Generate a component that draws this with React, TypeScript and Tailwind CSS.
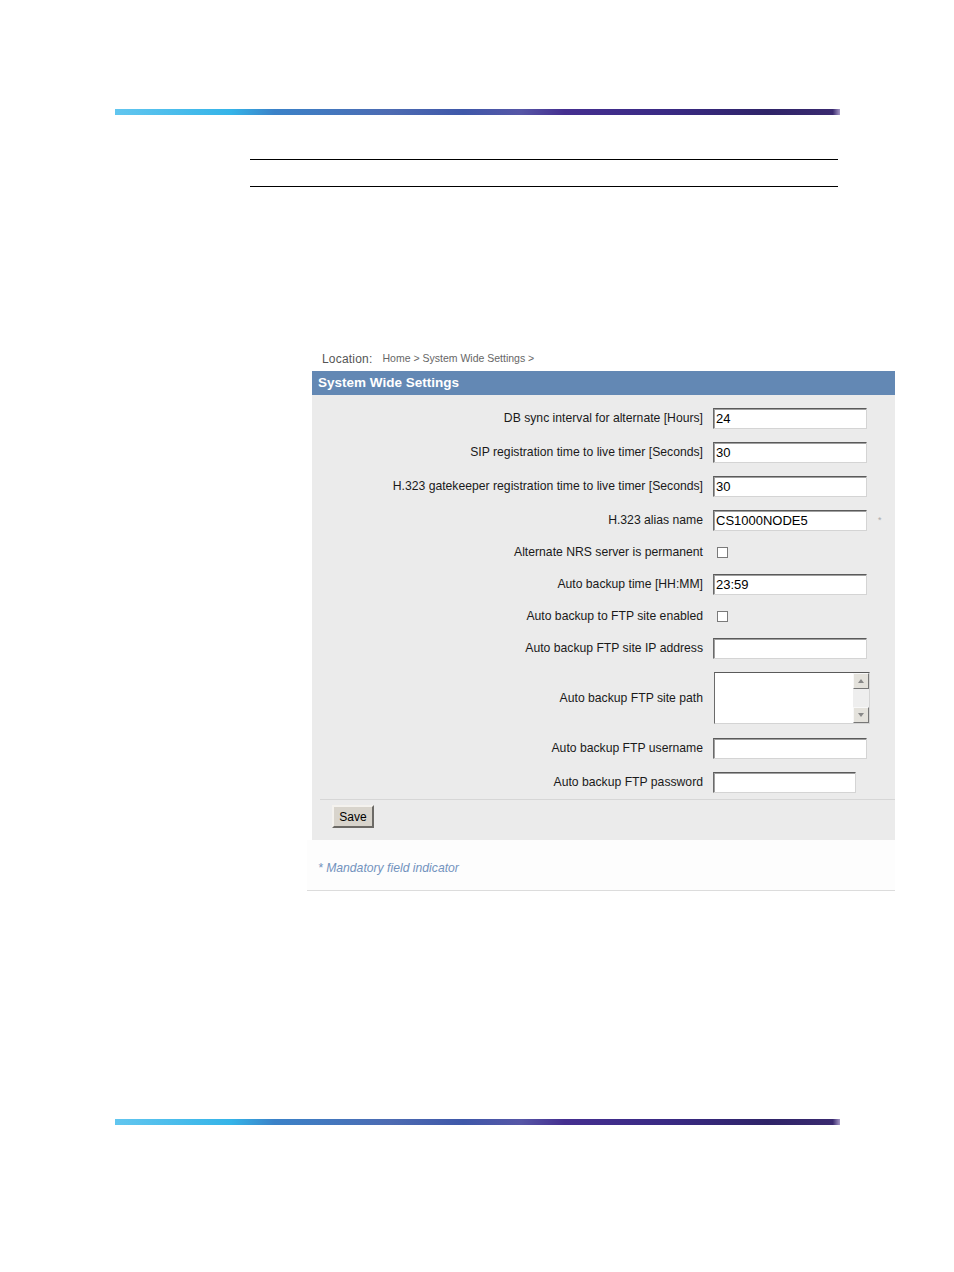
import type { ReactNode } from 'react';

const font = { fontFamily: '"Liberation Sans", Arial, sans-serif' };

function TextInput({ value = '', width = 'w-[154px]' }: { value?: string; width?: string }) {
  return (
    <div
      className={`${width} h-[21px] bg-white border border-t-[#5a5a5a] border-l-[#6a6a6a] border-r-[#d4d4d4] border-b-[#d4d4d4] shadow-[inset_1px_1px_0_#a0a0a0] flex items-center pl-[2px] text-[13px] leading-none text-black`}
    >
      {value}
    </div>
  );
}

function Checkbox() {
  return <div className="ml-[4px] w-[11px] h-[11px] bg-white border border-[#7a7a7a]" />;
}

function Row({ label, h, children }: { label: string; h: string; children: ReactNode }) {
  return (
    <div className={`flex items-center ${h}`}>
      <div className="w-[392px] text-right text-[12.2px] text-[#1a1a1a] pr-[1px] whitespace-nowrap">{label}</div>
      <div className="ml-[9px] flex items-center">{children}</div>
    </div>
  );
}

export default function App() {
  return (
    <div className="relative w-[954px] h-[1272px] bg-white" style={font}>
      <div className="pt-[109px]">
        {/* Top gradient bar */}
        <div className="ml-[115px] w-[725px] h-[6px] bg-[linear-gradient(to_right,#62c6ef_0%,#35b4e8_16%,#3b82c8_22%,#4d6bb2_38%,#3f58a9_48%,#5656a6_56%,#452f90_62%,#3a2a84_76%,#2f2468_90%,#3a2a70_99%,#a79ac7_100%)]" />

        {/* Rules */}
        <div className="ml-[250px] mt-[44px] w-[588px] border-t-[1.5px] border-black" />
        <div className="ml-[250px] mt-[26px] w-[588px] border-t-[1.5px] border-black" />

        {/* Panel */}
        <div className="ml-[307px] mt-[160px] w-[588px]">
          <div className="ml-[15px] h-[24px] flex items-center text-[#555]">
            <span className="text-[12px] tracking-[0.2px]">Location:</span>
            <span className="ml-[10px] text-[10.5px] text-[#666]">Home &gt; System Wide Settings &gt;</span>
          </div>

          <div className="ml-[5px] w-[583px]">
            <div className="h-[24px] bg-[#6388b4] flex items-center pl-[6px] text-white font-bold text-[13.5px]">
              System Wide Settings
            </div>

            <div className="bg-[#ebebeb] pt-[6px]">
              <Row label="DB sync interval for alternate [Hours]" h="h-[34px]">
                <TextInput value="24" />
              </Row>
              <Row label="SIP registration time to live timer [Seconds]" h="h-[34px]">
                <TextInput value="30" />
              </Row>
              <Row label="H.323 gatekeeper registration time to live timer [Seconds]" h="h-[34px]">
                <TextInput value="30" />
              </Row>
              <Row label="H.323 alias name" h="h-[34px]">
                <TextInput value="CS1000NODE5" />
                <span className="ml-[11px] text-[9px] text-[#aaa] mt-[2px]">*</span>
              </Row>
              <Row label="Alternate NRS server is permanent" h="h-[30px]">
                <Checkbox />
              </Row>
              <Row label="Auto backup time [HH:MM]" h="h-[34px]">
                <TextInput value="23:59" />
              </Row>
              <Row label="Auto backup to FTP site enabled" h="h-[30px]">
                <Checkbox />
              </Row>
              <Row label="Auto backup FTP site IP address" h="h-[34px]">
                <TextInput />
              </Row>
              <Row label="Auto backup FTP site path" h="h-[66px]">
                <div className="ml-[1px] w-[156px] h-[52px] bg-white border border-t-[#5a5a5a] border-l-[#6a6a6a] border-r-[#d4d4d4] border-b-[#d4d4d4] flex justify-end">
                  <div className="w-[16px] h-full bg-[#eeeeee] flex flex-col justify-between">
                    <div className="w-[16px] h-[16px] bg-[#e4e2dc] border border-t-[#f8f8f8] border-l-[#f8f8f8] border-r-[#777] border-b-[#777] flex items-center justify-center">
                      <div className="w-0 h-0 border-l-[3.5px] border-r-[3.5px] border-b-[4px] border-l-transparent border-r-transparent border-b-[#888]" />
                    </div>
                    <div className="w-[16px] h-[16px] bg-[#e4e2dc] border border-t-[#f8f8f8] border-l-[#f8f8f8] border-r-[#777] border-b-[#777] flex items-center justify-center">
                      <div className="w-0 h-0 border-l-[3.5px] border-r-[3.5px] border-t-[4px] border-l-transparent border-r-transparent border-t-[#888]" />
                    </div>
                  </div>
                </div>
              </Row>
              <Row label="Auto backup FTP username" h="h-[34px]">
                <TextInput />
              </Row>
              <Row label="Auto backup FTP password" h="h-[34px]">
                <TextInput width="w-[143px]" />
              </Row>

              <div className="ml-[8px] border-t border-[#d6d6d6]" />
              <div className="h-[40px] pl-[20px] pt-[5px] flex items-start">
                <button
                  type="button"
                  className="w-[42px] h-[23px] bg-[#d8d4cc] border-2 border-t-[#f4f2ee] border-l-[#f4f2ee] border-r-[#6c6a66] border-b-[#6c6a66] text-[12px] text-black leading-none"
                >
                  Save
                </button>
              </div>
            </div>
          </div>

          <div className="h-[51px] bg-[#fdfdfd] border-b border-[#dcdcdc] flex items-center pl-[11px] pt-[7px] text-[12.2px] italic text-[#7393bd]">
            * Mandatory field indicator
          </div>
        </div>
      </div>

      {/* Bottom gradient bar */}
      <div className="absolute left-[115px] top-[1119px] w-[725px] h-[6px] bg-[linear-gradient(to_right,#62c6ef_0%,#35b4e8_16%,#3b82c8_22%,#4d6bb2_38%,#3f58a9_48%,#5656a6_56%,#452f90_62%,#3a2a84_76%,#2f2468_90%,#3a2a70_99%,#a79ac7_100%)]" />
    </div>
  );
}
